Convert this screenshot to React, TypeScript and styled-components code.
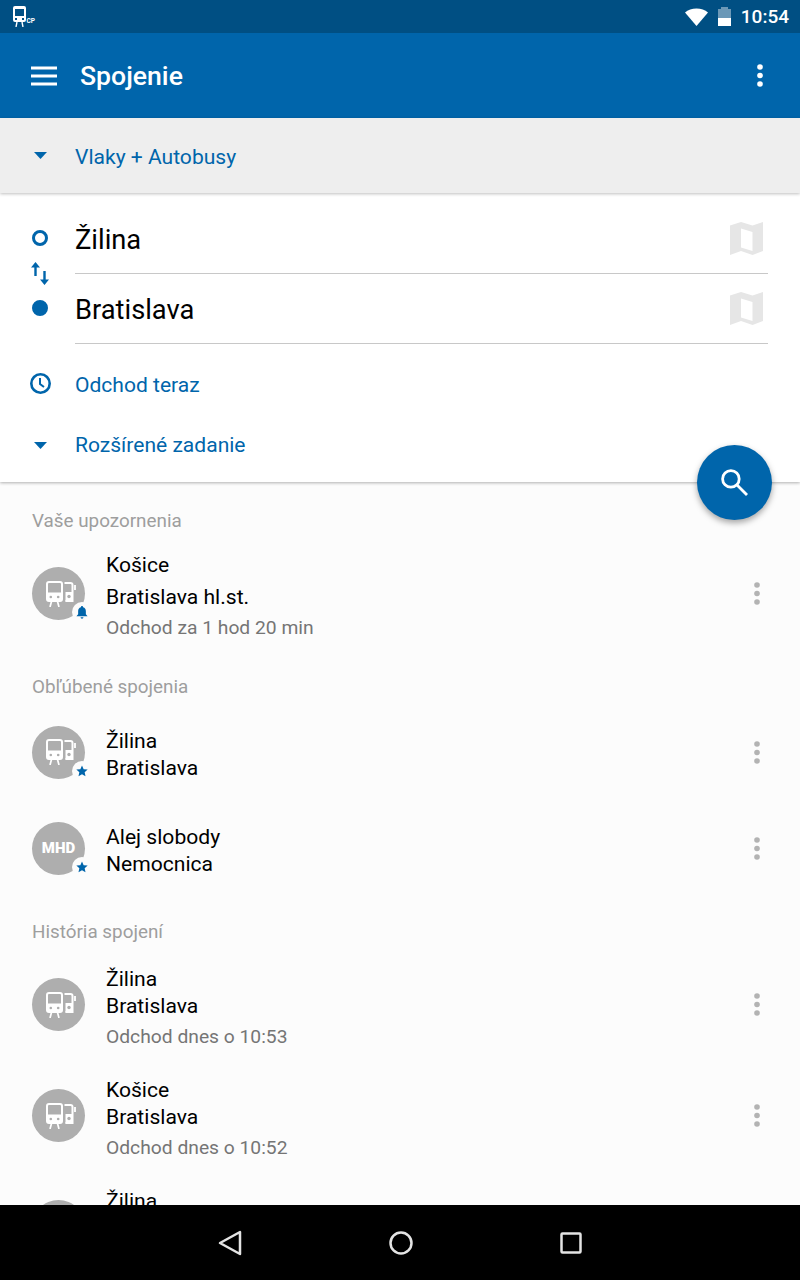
import styled, { createGlobalStyle } from "styled-components";

const GlobalStyle = createGlobalStyle`
  html, body {
    margin: 0;
    padding: 0;
    background: #000;
  }
  * {
    box-sizing: border-box;
  }
`;

const BLUE = "#0065ab";
const AVATAR = "#aeaeae";
const PAGE = "#fcfcfc";

const Screen = styled.div`
  width: 800px;
  height: 1280px;
  display: flex;
  flex-direction: column;
  position: relative;
  overflow: hidden;
  background: ${PAGE};
  font-family: Roboto, "Liberation Sans", sans-serif;
`;

const StatusBar = styled.div`
  height: 33px;
  flex: none;
  background: #004f83;
  display: flex;
  align-items: center;
  padding: 0 11px 0 13px;
  color: #fff;
`;

const StatusRight = styled.div`
  margin-left: auto;
  display: flex;
  align-items: center;
  gap: 10px;
`;

const ClockText = styled.span`
  font-size: 19px;
  font-weight: 500;
`;

const AppBar = styled.div`
  height: 85px;
  flex: none;
  background: ${BLUE};
  display: flex;
  align-items: center;
  padding: 0 37px 0 30px;
  color: #fff;
`;

const AppTitle = styled.h1`
  margin: 0 0 0 22px;
  font-size: 26.6px;
  font-weight: 500;
`;

const MoreButton = styled.div`
  margin-left: auto;
  display: flex;
`;

const ModeBar = styled.div`
  height: 75px;
  flex: none;
  background: #eeeeee;
  display: flex;
  align-items: center;
  padding-top: 2px;
  box-shadow: 0 1px 3px rgba(0, 0, 0, 0.25);
  position: relative;
  z-index: 2;
`;

const IconSlot = styled.div<{ raise?: number }>`
  width: 75px;
  flex: none;
  padding-left: 29px;
  margin-bottom: ${({ raise }) => raise ?? 0}px;
`;

const IconBox = styled.div`
  width: 22px;
  display: flex;
  justify-content: center;
`;

const LinkText = styled.span`
  color: ${BLUE};
  font-size: 21.05px;
`;

const Form = styled.div`
  flex: none;
  height: 289px;
  background: #fff;
  padding-top: 11px;
  box-shadow: 0 1px 3px rgba(0, 0, 0, 0.3);
  position: relative;
  z-index: 1;
`;

const Places = styled.div`
  display: flex;
  margin-bottom: 10px;
`;

const MarkerColumn = styled.div`
  width: 75px;
  flex: none;
  padding: 26px 0 0 32px;
  display: flex;
  flex-direction: column;
  align-items: flex-start;
`;

const Dot = styled.div<{ filled?: boolean }>`
  width: 16px;
  height: 16px;
  border-radius: 50%;
  border: 3px solid ${BLUE};
  background: ${({ filled }) => (filled ? BLUE : "transparent")};
`;

const SwapBox = styled.div`
  display: flex;
  margin: 16px 0 15px -1px;
`;

const PlaceColumn = styled.div`
  width: 693px;
  flex: none;
`;

const PlaceField = styled.div`
  height: 70px;
  display: flex;
  align-items: center;
  justify-content: space-between;
  padding-right: 5px;
  border-bottom: 1px solid #c8c8c8;
`;

const PlaceName = styled.span`
  font-size: 27.3px;
  padding-top: 2px;
  color: #000;
`;

const OptionRow = styled.div`
  height: 60px;
  display: flex;
  align-items: center;
`;

const Fab = styled.div`
  position: absolute;
  left: 697px;
  top: 445px;
  width: 75px;
  height: 75px;
  border-radius: 50%;
  background: ${BLUE};
  box-shadow: 0 3px 6px rgba(0, 0, 0, 0.35);
  display: flex;
  align-items: center;
  justify-content: center;
  z-index: 3;
`;

const List = styled.div`
  flex: 1;
  min-height: 0;
  overflow: hidden;
`;

const SectionTitle = styled.div<{ gap: number }>`
  height: 39px;
  line-height: 40px;
  margin-top: ${({ gap }) => gap}px;
  padding-left: 32px;
  font-size: 18.85px;
  color: #9e9e9e;
`;

const Item = styled.div<{ rowHeight: number }>`
  height: ${({ rowHeight }) => rowHeight}px;
  display: flex;
  align-items: center;
  padding: 0 40px 0 32px;
`;

const Avatar = styled.div`
  width: 53px;
  height: 53px;
  flex: none;
  margin-bottom: 4px;
  border-radius: 50%;
  background: ${AVATAR};
  display: flex;
  align-items: center;
  justify-content: center;
  position: relative;
  color: #fff;
  font-size: 15px;
  font-weight: 900;
`;

const IconShift = styled.div`
  display: flex;
  margin-left: 5px;
`;

const Badge = styled.div`
  position: absolute;
  right: -7px;
  bottom: -2px;
  width: 20px;
  height: 20px;
  border-radius: 50%;
  background: ${PAGE};
  display: flex;
  align-items: center;
  justify-content: center;
`;

const ItemText = styled.div<{ shifted?: boolean }>`
  margin-left: 21px;
  flex: 1;
  display: flex;
  flex-direction: column;
  padding-top: ${({ shifted }) => (shifted ? 5 : 0)}px;
`;

const Place = styled.div<{ tall?: boolean }>`
  font-size: 21.1px;
  line-height: ${({ tall }) => (tall ? 32 : 27.5)}px;
  color: #000;
`;

const When = styled.div<{ tall?: boolean }>`
  font-size: 19.25px;
  line-height: ${({ tall }) => (tall ? 30 : 34)}px;
  color: #757575;
`;

const ItemMenu = styled.div`
  display: flex;
  margin-bottom: 4px;
`;

const NavBar = styled.div`
  height: 75px;
  flex: none;
  background: #000;
  display: grid;
  grid-template-columns: repeat(3, 170.5px);
  align-items: center;
  justify-items: center;
  padding-left: 145px;
  position: relative;
  z-index: 2;
`;

const DeviceIcon = () => (
  <svg width="23" height="21" viewBox="0 0 23 21">
    <path fill="#fff" fillRule="evenodd" d="M2 0h9a2 2 0 0 1 2 2v12a2 2 0 0 1-2 2H2a2 2 0 0 1-2-2V2a2 2 0 0 1 2-2zM2 3v7h9V3z" />
    <path fill="#004f83" d="M2 12h2v2H2zM9 12h2v2H9z" />
    <path stroke="#fff" strokeWidth="1.4" fill="none" d="M4 16l-1 5M9 16l1 5" />
    <text x="13.500" y="16.500" fontSize="6.500" fontWeight="700" fill="#fff" fontFamily="Roboto, sans-serif">CP</text>
  </svg>
);

const Wifi = () => (
  <svg width="23" height="18" viewBox="0 0 23 18">
    <path fill="#fff" d="M0 4.500C3 1.900 7 .5 11.500.5s8.500 1.400 11.500 4L11.500 18z" />
  </svg>
);

const Battery = () => (
  <svg width="13" height="19" viewBox="0 0 13 19">
    <path fill="#fff" fillOpacity="0.42" d="M3 0h7v2h3v9H0V2h3z" />
    <rect y="11" width="13" height="8" fill="#fff" />
  </svg>
);

const Hamburger = () => (
  <svg width="28" height="20" viewBox="0 0 28 20">
    <path stroke="#fff" strokeWidth="3" d="M1 2h26M1 10h26M1 18h26" />
  </svg>
);

const VerticalDots = ({ color }: { color: string }) => (
  <svg width="6" height="23" viewBox="0 0 6 23" fill={color}>
    <circle cx="3" cy="3" r="2.800" />
    <circle cx="3" cy="11.500" r="2.800" />
    <circle cx="3" cy="20" r="2.800" />
  </svg>
);

const Caret = () => (
  <svg width="13" height="7" viewBox="0 0 13 7">
    <path fill={BLUE} d="M0 0h13L6.500 7z" />
  </svg>
);

const SwapArrows = () => (
  <svg width="18" height="23" viewBox="0 0 18 23" fill={BLUE}>
    <path d="M0 5.500L4.500 0 9 5.500H5.700V14H3.300V5.500z" />
    <path d="M9 17.500L13.500 23 18 17.500H14.700V9H12.300V17.500z" />
  </svg>
);

const MapIcon = () => (
  <svg width="33" height="33" viewBox="0 0 33 33">
    <path fill="#e6e6e6" fillRule="evenodd" d="M0 3.500L11 0l11.500 3.500L33 0v29l-10.500 4L11 29 0 33zM11 6.500v19l11.500 3.500V10z" />
  </svg>
);

const ClockIcon = () => (
  <svg width="21" height="21" viewBox="0 0 21 21" fill="none" stroke={BLUE}>
    <circle cx="10.500" cy="10.500" r="9.200" strokeWidth="2.600" />
    <path strokeWidth="2" d="M10 5v6l4 3" />
  </svg>
);

const SearchIcon = () => (
  <svg width="30" height="30" viewBox="0 0 30 30" fill="none" stroke="#fff" strokeWidth="2.800">
    <circle cx="10.900" cy="10.900" r="8.300" />
    <path d="M16.800 16.800L27 27" />
  </svg>
);

// train and bus side by side, outlined like the app's list icon
const TransportIcon = () => (
  <svg width="30" height="26" viewBox="0 0 30 26" fill="none" stroke="#fff" strokeWidth="2">
    <rect x="1" y="1" width="15" height="19" rx="2" />
    <path fill="#fff" stroke="none" d="M1 11.500h15V18a2 2 0 0 1-2 2H3a2 2 0 0 1-2-2z" />
    <circle cx="4.800" cy="16" r="1.300" fill={AVATAR} stroke="none" />
    <circle cx="12.200" cy="16" r="1.300" fill={AVATAR} stroke="none" />
    <path strokeWidth="1.700" d="M5.500 20.500l-1.500 5.500M11.500 20.500l1.500 5.500" />
    <path d="M18.500 2h6a2 2 0 0 1 2 2v16h-7" />
    <path fill="#fff" stroke="none" d="M19.500 11h7v9.500h-7z" />
    <circle cx="23" cy="15.500" r="1.700" fill={AVATAR} stroke="none" />
    <path d="M29 4v5" strokeWidth="1.800" />
  </svg>
);

const BellIcon = () => (
  <svg width="12" height="13" viewBox="0 0 14 15">
    <path fill={BLUE} d="M7 0a1.300 1.300 0 0 1 1.300 1.400C10.500 2 11.500 3.800 11.500 6v3.500L13.500 12H.5l2-2.500V6c0-2.200 1-4 3.200-4.600A1.300 1.300 0 0 1 7 0zM5.300 13h3.400a1.700 1.700 0 0 1-3.400 0z" />
  </svg>
);

const StarIcon = () => (
  <svg width="12" height="12" viewBox="0 0 24 24">
    <path fill={BLUE} d="M12 1l3.300 7.400 8 .8-6 5.400 1.700 8L12 18.500 5 22.600l1.700-8-6-5.400 8-.8z" />
  </svg>
);

type Entry = {
  from: string;
  to: string;
  when?: string;
  badge?: "bell" | "star";
  mhd?: boolean;
  rowHeight: number;
  tall?: boolean;
};

const ConnectionRow = ({ entry }: { entry: Entry }) => (
  <Item rowHeight={entry.rowHeight}>
    <Avatar>
      {entry.mhd ? "MHD" : <IconShift><TransportIcon /></IconShift>}
      {entry.badge && <Badge>{entry.badge === "bell" ? <BellIcon /> : <StarIcon />}</Badge>}
    </Avatar>
    <ItemText shifted={!!entry.when && !entry.tall}>
      <Place tall={entry.tall}>{entry.from}</Place>
      <Place tall={entry.tall}>{entry.to}</Place>
      {entry.when && <When tall={entry.tall}>{entry.when}</When>}
    </ItemText>
    <ItemMenu>
      <VerticalDots color="#b3b3b3" />
    </ItemMenu>
  </Item>
);

const alerts: Entry[] = [
  { from: "Košice", to: "Bratislava hl.st.", when: "Odchod za 1 hod 20 min", badge: "bell", rowHeight: 111, tall: true },
];
const favourites: Entry[] = [
  { from: "Žilina", to: "Bratislava", badge: "star", rowHeight: 96 },
  { from: "Alej slobody", to: "Nemocnica", badge: "star", mhd: true, rowHeight: 96 },
];
const history: Entry[] = [
  { from: "Žilina", to: "Bratislava", when: "Odchod dnes o 10:53", rowHeight: 111 },
  { from: "Košice", to: "Bratislava", when: "Odchod dnes o 10:52", rowHeight: 111 },
  { from: "Žilina", to: "Bratislava", when: "Odchod dnes o 10:51", rowHeight: 111 },
];

export default function App() {
  return (
    <Screen>
      <GlobalStyle />
      <StatusBar>
        <DeviceIcon />
        <StatusRight>
          <Wifi />
          <Battery />
          <ClockText>10:54</ClockText>
        </StatusRight>
      </StatusBar>
      <AppBar>
        <Hamburger />
        <AppTitle>Spojenie</AppTitle>
        <MoreButton>
          <VerticalDots color="#fff" />
        </MoreButton>
      </AppBar>
      <ModeBar>
        <IconSlot raise={3}>
          <IconBox>
            <Caret />
          </IconBox>
        </IconSlot>
        <LinkText>Vlaky + Autobusy</LinkText>
      </ModeBar>
      <Form>
        <Places>
          <MarkerColumn>
            <Dot />
            <SwapBox>
              <SwapArrows />
            </SwapBox>
            <Dot filled />
          </MarkerColumn>
          <PlaceColumn>
            <PlaceField>
              <PlaceName>Žilina</PlaceName>
              <MapIcon />
            </PlaceField>
            <PlaceField>
              <PlaceName>Bratislava</PlaceName>
              <MapIcon />
            </PlaceField>
          </PlaceColumn>
        </Places>
        <OptionRow>
          <IconSlot raise={2}>
            <IconBox>
              <ClockIcon />
            </IconBox>
          </IconSlot>
          <LinkText>Odchod teraz</LinkText>
        </OptionRow>
        <OptionRow>
          <IconSlot raise={-2}>
            <IconBox>
              <Caret />
            </IconBox>
          </IconSlot>
          <LinkText>Rozšírené zadanie</LinkText>
        </OptionRow>
      </Form>
      <Fab>
        <SearchIcon />
      </Fab>
      <List>
        <SectionTitle gap={19}>Vaše upozornenia</SectionTitle>
        {alerts.map((entry, index) => (
          <ConnectionRow key={index} entry={entry} />
        ))}
        <SectionTitle gap={16}>Obľúbené spojenia</SectionTitle>
        {favourites.map((entry, index) => (
          <ConnectionRow key={index} entry={entry} />
        ))}
        <SectionTitle gap={14}>História spojení</SectionTitle>
        {history.map((entry, index) => (
          <ConnectionRow key={index} entry={entry} />
        ))}
      </List>
      <NavBar>
        <svg width="26" height="26" viewBox="0 0 26 26" fill="none" stroke="#e4e4e4" strokeWidth="2.500" strokeLinejoin="round">
          <path d="M23 2v22L3 13z" />
        </svg>
        <svg width="24" height="24" viewBox="0 0 24 24" fill="none" stroke="#e4e4e4" strokeWidth="2.500">
          <circle cx="12" cy="12" r="10.500" />
        </svg>
        <svg width="22" height="22" viewBox="0 0 22 22" fill="none" stroke="#e4e4e4" strokeWidth="2.500" strokeLinejoin="round">
          <rect x="1.500" y="1.500" width="19" height="19" rx="1" />
        </svg>
      </NavBar>
    </Screen>
  );
}
